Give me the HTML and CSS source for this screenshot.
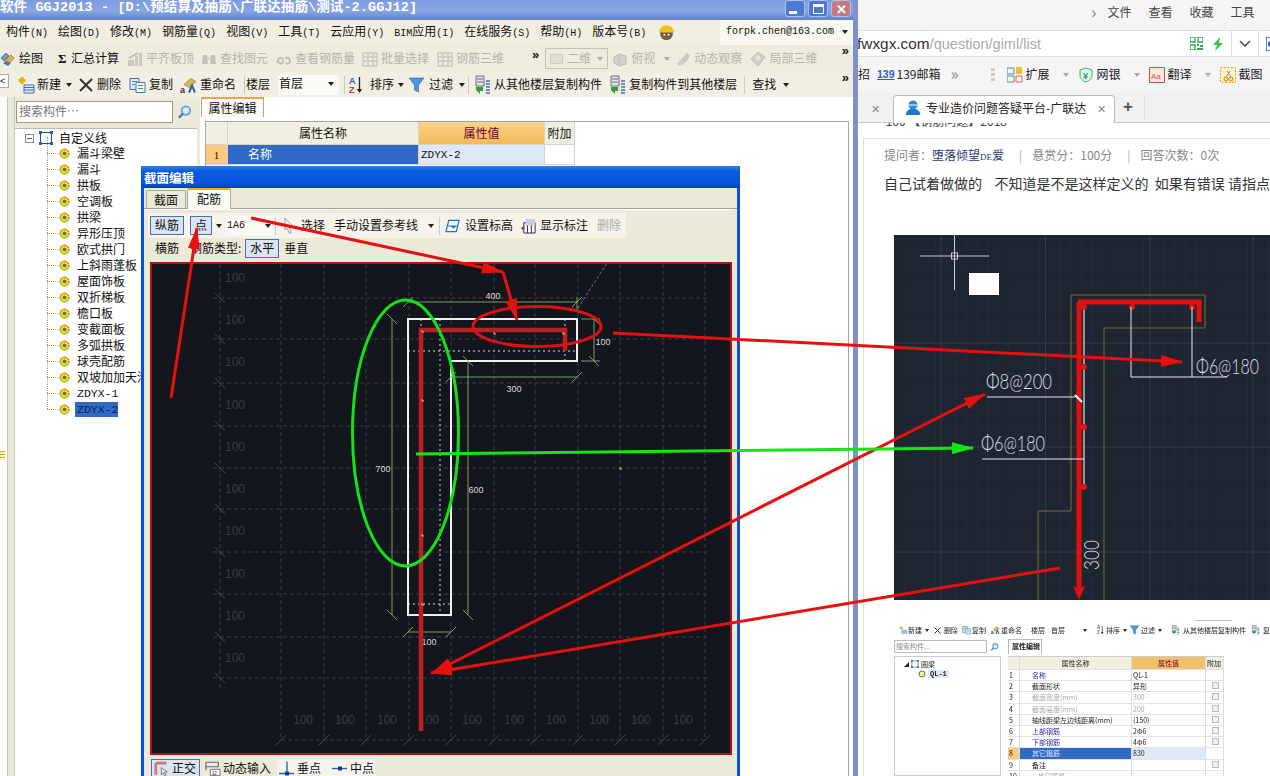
FILE: index.html
```html
<!DOCTYPE html>
<html lang="zh-CN">
<head>
<meta charset="utf-8">
<title>GGJ2013 截面编辑</title>
<link rel="stylesheet" href="styles.css">
</head>
<body>
<svg class="sprite" width="0" height="0">
  <defs>
    <symbol id="i-draw" viewBox="0 0 16 16"><path d="M1 7l5-5 3 3-5 5z" fill="#6a9ad8" stroke="#345" stroke-width=".6"/><path d="M6 8l5-4 3 3-5 6-4-1z" fill="#e8b040" stroke="#753" stroke-width=".6"/><path d="M3 12l5 3 3-3-4-2z" fill="#4a78c0"/></symbol>
    <symbol id="i-off1" viewBox="0 0 16 16"><path d="M1 9h6v6H1zM8 5h3v10H8zM12 2h3v13h-3z" fill="#c9c9c0"/><path d="M2 7l9-5" stroke="#bbb" stroke-width="2"/></symbol>
    <symbol id="i-off2" viewBox="0 0 16 16"><path d="M2 4h4l1 9H1zM10 4h4l1 9H9z" fill="#c4c4bb"/><path d="M6 6h4v3H6z" fill="#d4d4cc"/></symbol>
    <symbol id="i-off3" viewBox="0 0 16 16"><path d="M2 9c2-3 4-3 5 0s-1 4-3 3-3-1-2-3zM9 7c2-1 5 0 5 3s-3 3-4 2" fill="none" stroke="#c0c0b8" stroke-width="2"/></symbol>
    <symbol id="i-off4" viewBox="0 0 16 16"><path d="M1 2h14v13H1zM1 6h14M1 10h14M6 2v13M11 2v13" fill="none" stroke="#c8c8c0" stroke-width="1.4"/></symbol>
    <symbol id="i-off5" viewBox="0 0 16 16"><path d="M2 6l5-3 7 2v8l-6 2-6-3z" fill="#d2d2ca" stroke="#bbb"/><path d="M7 3v12" stroke="#bbb"/></symbol>
    <symbol id="i-off6" viewBox="0 0 16 16"><path d="M2 13L12 2l3 2-3 6-7 5z" fill="#c8c8c0"/><path d="M3 8l7 6" stroke="#dedad0" stroke-width="1.5"/></symbol>
    <symbol id="i-off7" viewBox="0 0 16 16"><path d="M8 1l7 5-7 9-7-7z" fill="#d0d0c8" stroke="#bbb"/><circle cx="8" cy="7" r="2.5" fill="#e8e6dc"/></symbol>
    <symbol id="i-new" viewBox="0 0 20 20"><path d="M7 2v7M3.500 5.500h7" stroke="#e0b010" stroke-width="3"/><path d="M9 10h10v8H9z" fill="#dfe9f6" stroke="#3a70b8"/><path d="M9 12.500h10M9 15h10" stroke="#3a70b8"/></symbol>
    <symbol id="i-del" viewBox="0 0 14 14"><path d="M1 1l12 12M13 1L1 13" stroke="#333" stroke-width="2"/></symbol>
    <symbol id="i-copy" viewBox="0 0 17 17"><path d="M1 2h9v11H1z" fill="#dfe8f4" stroke="#4a74a8"/><path d="M7 6h9v10H7z" fill="#f6f8fc" stroke="#4a74a8"/><path d="M3 5h5M3 8h3M9 9h5M9 12h5" stroke="#5a7cb0"/></symbol>
    <symbol id="i-rename" viewBox="0 0 17 17"><path d="M4 8l7-6 5 3-7 6z" fill="#d8b45a" stroke="#8a7030" stroke-width=".6"/><text x="0" y="16" class="ic-text">a</text><path d="M9 16l3-7 3 7" fill="none" stroke="#2a62b0" stroke-width="2"/></symbol>
    <symbol id="i-sort" viewBox="0 0 14 20"><text x="0" y="8.500" class="ic-az">A</text><text x="0" y="18" class="ic-za">Z</text><path d="M10.500 2v15" stroke="#222" stroke-width="1.300"/><path d="M8 14l2.500 4 2.500-4z" fill="#222"/></symbol>
    <symbol id="i-filter" viewBox="0 0 15 16"><path d="M0 1h15L9.500 8v7l-4-2V8z" fill="#4f93d8" stroke="#2a62a8" stroke-width=".6"/></symbol>
    <symbol id="i-floor" viewBox="0 0 17 20"><path d="M2 1h8v10H2z" fill="#e2e6ee" stroke="#667"/><path d="M3 4h6M3 7h6" stroke="#667"/><path d="M2 12h7v4H6v3L2 15z" fill="#3a9a3a"/><path d="M12 6h4M12 9h4M12 12h4M12 15h4M12 18h4" stroke="#3a70b8" stroke-width="1.500"/></symbol>
    <symbol id="i-search" viewBox="0 0 16 16"><circle cx="9.500" cy="6.500" r="4.500" fill="#dbeaf8" stroke="#6aa0d8" stroke-width="2"/><path d="M6 10l-4 4" stroke="#3f7cc0" stroke-width="2.500"/></symbol>
    <symbol id="i-node" viewBox="0 0 12 12"><circle cx="6" cy="6" r="5" fill="#e8d820" stroke="#5a5208" stroke-width="1" stroke-dasharray="1.500 1"/><circle cx="6" cy="6" r="2" fill="#7a6a10"/></symbol>
    <symbol id="i-root" viewBox="0 0 14 14"><path d="M1.500 1.500h11v11h-11z" fill="#fff" stroke="#1c4f9c"/><path d="M0 0h3v3H0zM11 0h3v3h-3zM0 11h3v3H0zM11 11h3v3h-3z" fill="#2a62b8"/></symbol>
    <symbol id="i-level" viewBox="0 0 16 16"><path d="M4 2h11l-3 12H1z" fill="#eef5fc" stroke="#2a72b8" stroke-width="1.300"/><path d="M3 8h10" stroke="#2a72b8"/><path d="M6 8l3 3 3-3z" fill="#2a72b8"/></symbol>
    <symbol id="i-mark" viewBox="0 0 16 17"><path d="M3 5h12v11H3zM7 5v11M11 5v11" fill="#fff" stroke="#223"/><path d="M5 1h10v7H5z" fill="#c4d0dc"/><circle cx="2" cy="11" r="1.500" fill="#b22"/></symbol>
    <symbol id="i-ortho" viewBox="0 0 18 16"><path d="M2 2h12M2 2v13" stroke="#c87878" stroke-width="3"/><path d="M8 7l7 5-3 .5 1.500 3-1.500 .5-1.500-3-2 2z" fill="#eee" stroke="#445" stroke-width=".7"/></symbol>
    <symbol id="i-dyn" viewBox="0 0 18 16"><path d="M1 1h14M1 6h14M1 1v9M15 1v5" fill="none" stroke="#667" stroke-width="1.300"/><path d="M6 9h11v7H6z" fill="#fff" stroke="#667"/><text x="7.500" y="15.500" class="ic-num">12</text></symbol>
    <symbol id="i-perp" viewBox="0 0 16 14"><path d="M0 12h15M8 0v12" stroke="#2a5ab8" stroke-width="1.300"/><rect x="6" y="10" width="4" height="4" fill="#1a3a90"/></symbol>
    <symbol id="i-mid" viewBox="0 0 16 14"><path d="M0 7h15" stroke="#2a5ab8" stroke-width="1.300"/><rect x="6" y="5" width="4" height="4" fill="#1a3a90"/></symbol>
    <marker id="ah" viewBox="0 0 22 12" refX="21" refY="6" markerWidth="22" markerHeight="12" markerUnits="userSpaceOnUse" orient="auto-start-reverse"><path d="M0 0L22 6L0 12z" fill="#e80f0f"/></marker>
    <marker id="ahg" viewBox="0 0 22 12" refX="21" refY="6" markerWidth="22" markerHeight="12" markerUnits="userSpaceOnUse" orient="auto"><path d="M0 0L22 6L0 12z" fill="#14e614"/></marker>
  </defs>
</svg>

<div class="desktop">
  <section class="gwin">
    <header class="gtitle">
      <span class="gtitle-text">软件 GGJ2013 - [D:\预结算及抽筋\广联达抽筋\测试-2.GGJ12]</span>
      <div class="wctl">
        <span class="wbtn"><i class="wmin"></i></span>
        <span class="wbtn"><i class="wmax"></i></span>
        <span class="wbtn wclose">✕</span>
      </div>
    </header>

    <nav class="menubar">
      <span>构件<b>(N)</b></span><span>绘图<b>(D)</b></span><span>修改<b>(M)</b></span><span>钢筋量<b>(Q)</b></span><span>视图<b>(V)</b></span><span>工具<b>(T)</b></span><span>云应用<b>(Y)</b></span><span><b>BIM</b>应用<b>(I)</b></span><span>在线服务<b>(S)</b></span><span>帮助<b>(H)</b></span><span>版本号<b>(B)</b></span>
      <svg class="hat" viewBox="0 0 16 16"><circle cx="8" cy="10" r="6" fill="#7a5a40"/><path d="M1 9a7 7 0 0 1 14 0z" fill="#f0c020"/><circle cx="6" cy="11" r="1" fill="#fff"/><circle cx="10" cy="11" r="1" fill="#fff"/></svg>
      <div class="account">forpk.chen@163.com<i class="caret"></i></div>
    </nav>

    <div class="tb tb1">
      <span class="ti"><svg class="ic16"><use href="#i-draw"/></svg>绘图</span>
      <span class="ti ml12"><b class="sigma">Σ</b>汇总计算</span>
      <span class="ti off ml8"><svg class="ic16"><use href="#i-off1"/></svg>平齐板顶</span>
      <span class="ti off ml7"><svg class="ic16"><use href="#i-off2"/></svg>查找图元</span>
      <span class="ti off ml8"><svg class="ic16"><use href="#i-off3"/></svg>查看钢筋量</span>
      <span class="ti off ml7"><svg class="ic16"><use href="#i-off4"/></svg>批量选择</span>
      <span class="ti off ml8"><svg class="ic16"><use href="#i-off4"/></svg>钢筋三维</span>
      <span class="more ml28">»</span>
      <span class="combo-off ml6"><i class="plane"></i>二维<i class="caret grey"></i></span>
      <span class="ti off ml4"><svg class="ic16"><use href="#i-off5"/></svg>俯视<i class="caret grey"></i></span>
      <span class="ti off ml5"><svg class="ic16"><use href="#i-off6"/></svg>动态观察</span>
      <span class="ti off ml8"><svg class="ic16"><use href="#i-off7"/></svg>局部三维</span>
      <span class="more right">»</span>
    </div>

    <div class="tb tb2">
      <span class="collapse">&lt;</span>
      <svg class="ic20 ml6"><use href="#i-new"/></svg><span class="ml2">新建</span><i class="caret ml5"></i>
      <svg class="ic14 ml7"><use href="#i-del"/></svg><span class="ml4">删除</span>
      <svg class="ic17 ml8"><use href="#i-copy"/></svg><span class="ml3">复制</span>
      <svg class="ic17 ml7"><use href="#i-rename"/></svg><span class="ml3">重命名</span>
      <i class="sep ml8"></i><span class="ml1">楼层</span>
      <span class="floor ml8">首层<i class="caret"></i></span>
      <i class="sep ml5"></i>
      <svg class="ic-sort ml4"><use href="#i-sort"/></svg><span class="ml7">排序</span><i class="caret ml4"></i>
      <svg class="ic15 ml5"><use href="#i-filter"/></svg><span class="ml5">过滤</span><i class="caret ml6"></i>
      <i class="sep ml3"></i>
      <svg class="ic17 ml5"><use href="#i-floor"/></svg><span class="ml3">从其他楼层复制构件</span>
      <svg class="ic17 ml7"><use href="#i-floor"/></svg><span class="ml3">复制构件到其他楼层</span>
      <i class="sep ml7"></i><span class="ml7">查找</span><i class="caret ml7"></i>
      <span class="more right">»</span>
    </div>

    <div class="gmain">
      <div class="rail"><span class="rail-mark"></span></div>
      <aside class="treepanel">
        <div class="searchrow">
          <span class="searchbox">搜索构件…</span>
          <svg class="ic15 search-ic"><use href="#i-search"/></svg>
        </div>
        <ul class="tree">
          <li class="root"><i class="minus"></i><svg class="rootbox"><use href="#i-root"/></svg>自定义线</li>
          <li><svg class="node"><use href="#i-node"/></svg>漏斗梁壁</li>
          <li><svg class="node"><use href="#i-node"/></svg>漏斗</li>
          <li><svg class="node"><use href="#i-node"/></svg>拱板</li>
          <li><svg class="node"><use href="#i-node"/></svg>空调板</li>
          <li><svg class="node"><use href="#i-node"/></svg>拱梁</li>
          <li><svg class="node"><use href="#i-node"/></svg>异形压顶</li>
          <li><svg class="node"><use href="#i-node"/></svg>欧式拱门</li>
          <li><svg class="node"><use href="#i-node"/></svg>上斜雨蓬板</li>
          <li><svg class="node"><use href="#i-node"/></svg>屋面饰板</li>
          <li><svg class="node"><use href="#i-node"/></svg>双折梯板</li>
          <li><svg class="node"><use href="#i-node"/></svg>檐口板</li>
          <li><svg class="node"><use href="#i-node"/></svg>变截面板</li>
          <li><svg class="node"><use href="#i-node"/></svg>多弧拱板</li>
          <li><svg class="node"><use href="#i-node"/></svg>球壳配筋</li>
          <li><svg class="node"><use href="#i-node"/></svg>双坡加加天沟</li>
          <li><svg class="node"><use href="#i-node"/></svg><span class="mono">ZDYX-1</span></li>
          <li><svg class="node"><use href="#i-node"/></svg><span class="mono sel">ZDYX-2</span></li>
        </ul>
      </aside>
      <section class="props">
        <div class="props-tabs"><span class="ptab">属性编辑</span></div>
        <div class="props-body">
          <div class="ptable">
            <span class="pc phead"></span><span class="pc phead">属性名称</span><span class="pc phead pval">属性值</span><span class="pc phead">附加</span>
            <span class="pc pnum">1</span><span class="pc pname">名称</span><span class="pc pvalue">ZDYX-2</span><span class="pc"></span>
          </div>
        </div>
      </section>
    </div>

    <!-- floating dialog window -->
    <section class="dlg">
      <header class="dlg-title">截面编辑</header>
      <div class="dlg-tabs"><span class="dtab">截面</span><span class="dtab on">配筋</span></div>
      <div class="dlg-panel">
        <div class="drow drow1">
          <span class="dbtn w34">纵筋</span>
          <span class="dbtn w22 ml6">点</span><i class="caret ml4"></i>
          <span class="dcombo ml3">1A6<i class="caret"></i></span>
          <i class="sep ml2"></i>
          <svg class="cursor ml8" viewBox="0 0 12 18"><path d="M1 1l10 10H6l2 6-2 .5-3-6-2 2z" fill="#eee" stroke="#999"/></svg>
          <span class="ml6">选择</span>
          <span class="ml9">手动设置参考线</span><i class="caret ml10"></i>
          <i class="sep ml5"></i>
          <svg class="ic15 ml5"><use href="#i-level"/></svg><span class="ml5">设置标高</span>
          <svg class="ic15 ml8"><use href="#i-mark"/></svg><span class="ml4">显示标注</span>
          <span class="gray ml9">删除</span>
        </div>
        <div class="drow drow2">
          <span class="ml7">横筋</span><span class="ml11">钢筋类型:</span>
          <span class="dbtn w34 ml4">水平</span><span class="ml5">垂直</span>
        </div>
        <svg class="cad" viewBox="150 262 582 493">
          <rect x="150" y="262" width="582" height="493" fill="#b3101a"/>
          <rect x="152" y="264" width="578" height="489" fill="#14161e"/>
          <path class="grid" d="M213 298H710M213 339H710M213 383H710M213 426H710M213 468H710M213 509H710M213 552H710M213 594H710M213 637H710M213 678H710M281 264V740M324 264V740M366 264V740M409 264V740M451 264V740M494 264V740M535 264V740M578 264V740M620 264V740M663 264V740M705 264V740M220 264V690M281 740H705"/>
          <path class="ticks" d="M215 293l10 10M215 334l10 10M215 378l10 10M215 421l10 10M215 463l10 10M215 504l10 10M215 547l10 10M215 589l10 10M215 632l10 10M215 673l10 10M276 745l10-10M319 745l10-10M361 745l10-10M404 745l10-10M446 745l10-10M489 745l10-10M530 745l10-10M573 745l10-10M615 745l10-10M658 745l10-10M700 745l10-10"/>
          <g class="lbl">
            <text x="235" y="282">100</text><text x="235" y="324">100</text><text x="235" y="366">100</text><text x="235" y="409">100</text><text x="235" y="451">100</text><text x="235" y="493">100</text><text x="235" y="535">100</text><text x="235" y="578">100</text><text x="235" y="620">100</text><text x="235" y="662">100</text>
            <text x="303" y="724">100</text><text x="345" y="724">100</text><text x="387" y="724">100</text><text x="429" y="724">100</text><text x="472" y="724">100</text><text x="514" y="724">100</text><text x="556" y="724">100</text><text x="599" y="724">100</text><text x="641" y="724">100</text><text x="683" y="724">100</text>
          </g>
          <path class="dash-w" d="M408 351H577M565 319V361M440 319V615M421 319V335M408 604H451"/>
          <path class="guide" d="M578 308L607 263"/>
          <path class="section" d="M408 319H577V361H451V615H408z"/>
          <path class="dim" d="M408 302H577M403 307l10-10M572 307l10-10M577 297V312M594 319V361M589 314l10 10M589 356l10 10M581 319H600M581 361H600M451 377H577M446 382l10-10M572 382l10-10M468 361V615M463 356l10 10M463 610l10 10M392 319V615M387 314l10 10M387 610l10 10M408 632H451M403 637l10-10M446 637l10-10"/>
          <g class="dimt"><text x="493" y="299">400</text><text x="603" y="345">100</text><text x="514" y="392">300</text><text x="476" y="493">600</text><text x="383" y="472">700</text><text x="429" y="645">100</text></g>
          <path class="bar" d="M421 731V330H565V351"/>
          <path class="pts" d="M421 331h2v2M493 333h2v2M562 333h2v2M421 400h2v2M421 535h2v2M421 604h2v2M619 468h2v2"/>
        </svg>
        <div class="dstatus">
          <span class="sbtn"><svg class="ic-st"><use href="#i-ortho"/></svg>正交</span>
          <span class="sitem ml5"><svg class="ic-st"><use href="#i-dyn"/></svg>动态输入</span>
          <span class="sitem light ml6"><svg class="ic-st"><use href="#i-perp"/></svg>垂点<svg class="ic-st ml9"><use href="#i-mid"/></svg>中点</span>
        </div>
      </div>
    </section>
  </section>

  <section class="browser">
    <div class="bmenu"><span class="chev">›</span><span>文件</span><span>查看</span><span>收藏</span><span>工具</span></div>
    <div class="baddr">
      <span class="url"><em>fwxgx.com</em>/question/giml/list</span>
      <svg class="qr" viewBox="0 0 13 13"><path d="M0 0h5v5H0zM8 0h5v5H8zM0 8h5v5H0z" fill="none" stroke="#2fa84f" stroke-width="1.300"/><path d="M7 7h2v2H7zM10 8h3v2h-3zM7 11h6v2H7z" fill="#2fa84f"/></svg>
      <svg class="bolt" viewBox="0 0 12 14"><path d="M8 0L1 8h4l-2 6 8-8H7z" fill="#33c44a"/></svg>
      <i class="vline"></i>
      <svg class="vchev" viewBox="0 0 12 8"><path d="M1 1l5 5 5-5" fill="none" stroke="#555" stroke-width="1.600"/></svg>
      <i class="vline"></i>
      <svg class="paw" viewBox="0 0 12 14"><path d="M0 0h12v14H0z" fill="#fff" stroke="#2a4fc0" stroke-width="1.500"/><circle cx="5" cy="7" r="3" fill="#2a4fc0"/></svg>
    </div>
    <div class="bbook">
      <span>招</span>
      <span class="b139 ml6"><b>139</b>139邮箱</span>
      <span class="dbl">»</span>
      <i class="grip"></i>
      <span class="bk"><svg class="bi" viewBox="0 0 16 16"><path d="M0 1h7v6H0z" fill="none" stroke="#3a8ad8"/><path d="M9 0h6v7H9z" fill="#f0c020"/><path d="M0 9h7v6H0z" fill="none" stroke="#3fb050"/><path d="M9 9h6v6H9z" fill="none" stroke="#e06060"/></svg>扩展<i class="caret grey ml10"></i></span>
      <span class="bk"><svg class="bi" viewBox="0 0 16 16"><path d="M8 1l6 2v5c0 4-3 6-6 7-3-1-6-3-6-7V3z" fill="#dff5ea" stroke="#3fb070"/><text x="5" y="12" class="ic-yen">¥</text></svg>网银<i class="caret grey ml10"></i></span>
      <span class="bk"><svg class="bi" viewBox="0 0 16 16"><path d="M.5.500h15v15H.5z" fill="#fde8e4" stroke="#d05040"/><text x="2" y="12" class="ic-aa">Aa</text></svg>翻译<i class="caret grey ml10"></i></span>
      <span class="bk"><svg class="bi" viewBox="0 0 16 16"><path d="M.5.500h15v15H.5z" fill="#fff2c8" stroke="#e0a020" stroke-dasharray="2 1.500"/><circle cx="6" cy="12" r="2" fill="none" stroke="#d08010"/><circle cx="11" cy="12" r="2" fill="none" stroke="#d08010"/><path d="M6 10l4-6M11 10L7 4" stroke="#888"/></svg>截图</span>
    </div>
    <div class="btabs">
      <span class="tabx first">✕</span>
      <div class="tab">
        <svg class="tabicon" viewBox="0 0 16 16"><circle cx="8" cy="5" r="4.500" fill="#2a8ad8"/><path d="M1 15c0-5 3-6 7-6s7 1 7 6z" fill="#1c78c8"/><path d="M4 5h8" stroke="#fff"/></svg>
        <span class="tabt">专业造价问题答疑平台-广联达</span>
        <span class="tabx">✕</span>
      </div>
      <span class="plus">+</span>
      <i class="tabend"></i>
    </div>
    <div class="bpage">
      <div class="clip"><span>▪ 100 【钢筋问题】2018</span></div>
      <article class="card">
        <p class="meta">提问者：<a>堕落倾望<b>DE</b>爱</a><i>|</i>悬赏分：100分<i>|</i>回答次数：0次</p>
        <p class="qtext">自己试着做做的&nbsp;&nbsp;&nbsp;&nbsp;不知道是不是这样定义的&nbsp;&nbsp;如果有错误&nbsp;请指点</p>
        <svg class="shot" viewBox="894 235 376 365">
          <defs><pattern id="mg" width="10.400" height="10.400" patternUnits="userSpaceOnUse"><path d="M10.400 0V10.400H0" fill="none" stroke="#29303b" stroke-width=".7"/></pattern></defs>
          <rect x="894" y="235" width="376" height="365" fill="#1f2530"/>
          <rect x="894" y="235" width="376" height="365" fill="url(#mg)"/>
          <path class="cmajor" d="M941 235V600M1045.500 235V600M1150 235V600M1253 235V600M894 343H1270M894 447H1270M894 552H1270"/>
          <path class="cross" d="M920 256H989M954.500 235V290"/>
          <rect class="cross" x="951.500" y="253" width="6" height="6" fill="none"/>
          <rect x="969" y="273" width="30" height="22" fill="#fff"/>
          <path class="outline" d="M1071 295H1205V328H1104V600M1071 295V511H1038V600"/>
          <path class="cgrey" d="M1084 307V487"/>
          <path class="cbar" d="M1078 302H1199V322M1079 302V590"/>
          <path d="M1079 600l-6-14 6 3 6-3z" fill="#e01010"/>
          <g fill="#d8161c"><circle cx="1084" cy="307" r="3"/><circle cx="1132" cy="307" r="3"/><circle cx="1192" cy="307" r="3"/><circle cx="1084" cy="367" r="3"/><circle cx="1084" cy="427" r="3"/><circle cx="1084" cy="487" r="3"/></g>
          <path class="lead" d="M1131 307V377H1227M1192 307V377M987 397H1075M982 459H1084"/>
          <path class="tickw" d="M1075 395l7 7"/>
          <g class="ct">
            <text x="1196" y="374" textLength="63" lengthAdjust="spacingAndGlyphs">Φ6@180</text>
            <text x="986" y="389" textLength="66" lengthAdjust="spacingAndGlyphs">Φ8@200</text>
            <text x="981" y="451" textLength="64" lengthAdjust="spacingAndGlyphs">Φ6@180</text>
            <text x="1099" y="570" transform="rotate(-90 1099 570)" textLength="30" lengthAdjust="spacingAndGlyphs">300</text>
          </g>
        </svg>
        <div class="thumb">
          <i class="th-topline"></i>
          <div class="th-tb">
            <svg class="th-ic"><use href="#i-new"/></svg><span class="ml1">新建</span><i class="th-c ml3"></i>
            <svg class="th-x ml5"><use href="#i-del"/></svg><span class="ml3">删除</span>
            <svg class="th-ic ml4"><use href="#i-copy"/></svg><span class="ml1">复制</span>
            <svg class="th-ic ml5"><use href="#i-rename"/></svg><span class="ml1">重命名</span>
            <span class="ml9">楼层</span><span class="ml6">首层</span><i class="th-c th-m1"></i>
            <svg class="th-ic ml9"><use href="#i-sort"/></svg><span class="ml1">排序</span><i class="th-c ml3"></i>
            <svg class="th-ic ml3"><use href="#i-filter"/></svg><span class="ml2">过滤</span><i class="th-c ml3"></i>
            <svg class="th-ic ml9"><use href="#i-floor"/></svg><span class="ml3">从其他楼层复制构件</span>
            <svg class="th-ic ml5"><use href="#i-floor"/></svg><span class="ml3">复制</span>
          </div>
          <div class="th-main">
            <div class="th-left">
              <div class="th-searchrow"><div class="th-search">搜索构件...</div><svg class="th-ic ml3"><use href="#i-search"/></svg></div>
              <div class="th-tree">
                <div><span class="th-tri">◢</span> <svg class="th-root"><use href="#i-root"/></svg> <span>圈梁</span></div>
                <div class="th-node"><svg class="th-dot" viewBox="0 0 8 8"><circle cx="4" cy="4" r="3" fill="#f4f0a0" stroke="#3a8a3a"/></svg><span>QL-1</span></div>
              </div>
            </div>
            <div class="th-right">
              <span class="th-tab">属性编辑</span>
              <div class="th-table">
                <span class="h"></span><span class="h c">属性名称</span><span class="h c o">属性值</span><span class="h">附加</span>
                <span>1</span><span class="b">名称</span><span>QL-1</span><span></span>
                <span>2</span><span>截面形状</span><span>异形</span><span class="k"><i></i></span>
                <span>3</span><span class="g">截面宽度(mm)</span><span class="g">300</span><span class="k"><i></i></span>
                <span>4</span><span class="g">截面高度(mm)</span><span class="g">200</span><span class="k"><i></i></span>
                <span>5</span><span>轴线距梁左边线距离(mm)</span><span>(150)</span><span class="k"><i></i></span>
                <span>6</span><span class="b">上部钢筋</span><span>2Φ6</span><span class="k"><i></i></span>
                <span>7</span><span class="b">下部钢筋</span><span>4Φ6</span><span class="k"><i></i></span>
                <span class="on">8</span><span class="sl">其它箍筋</span><span class="sv">830</span><span></span>
                <span>9</span><span>备注</span><span></span><span class="k"><i></i></span>
                <span>10</span><span class="g">+ 其它属性</span><span></span><span></span>
              </div>
            </div>
          </div>
        </div>
      </article>
    </div>
  </section>
</div>

<!-- annotation arrows drawn over the whole screen -->
<svg class="marks" viewBox="0 0 1270 776">
  <g class="red">
    <path d="M251 218L503 272" marker-end="url(#ah)"/>
    <path d="M503 272L517 320" marker-end="url(#ah)"/>
    <path d="M171 398L197 228" marker-end="url(#ah)"/>
    <path d="M613 333L1182 362" marker-end="url(#ah)"/>
    <path d="M432 673L985 394" marker-start="url(#ah)" marker-end="url(#ah)"/>
    <path d="M1060 568L431 673" marker-end="url(#ah)"/>
    <ellipse cx="537" cy="326.500" rx="64" ry="20"/>
  </g>
  <g class="green">
    <path d="M416 454L973 448" marker-end="url(#ahg)"/>
    <ellipse cx="405.500" cy="433" rx="53" ry="133"/>
  </g>
</svg>
</body>
</html>
```

FILE: styles.css
```css
* { box-sizing: border-box; }
html, body { margin: 0; padding: 0; width: 1270px; height: 776px; overflow: hidden; background: #fff; }
body { font: 12px/1.2 "Noto Sans CJK SC", "Noto Sans", sans-serif; color: #111; position: relative; }
.sprite { position: absolute; }
i { font-style: normal; display: block; }
svg { display: block; flex: none; }
.ic-text { font: 700 9px "Liberation Sans", sans-serif; fill: #333; }
.ic-az { font: 700 9px "Liberation Sans", sans-serif; fill: #2a62b0; }
.ic-za { font: 700 9px "Liberation Sans", sans-serif; fill: #c04040; }
.ic-num { font: 5px "Liberation Mono", monospace; fill: #333; }
.ic-yen { font: 700 9px "Liberation Sans", sans-serif; fill: #2a9a60; }
.ic-aa { font: 8px "Liberation Sans", sans-serif; fill: #d05040; }

.ml1 { margin-left: 1px; } .ml2 { margin-left: 2px; } .ml3 { margin-left: 3px; } .ml4 { margin-left: 4px; }
.ml5 { margin-left: 5px; } .ml6 { margin-left: 6px; } .ml7 { margin-left: 7px; } .ml8 { margin-left: 8px; }
.ml9 { margin-left: 9px; } .ml10 { margin-left: 10px; } .ml11 { margin-left: 11px; } .ml12 { margin-left: 12px; } .ml28 { margin-left: 28px; }

.desktop { display: flex; width: 1270px; height: 776px; }

/* left application window */
.gwin { position: relative; width: 858px; height: 776px; flex: none; display: flex; flex-direction: column; border-right: 5px solid #7f8fc9; background: #ece9d8; overflow: hidden; }
.gtitle { height: 20px; flex: none; display: flex; align-items: center; background: linear-gradient(#7d9ce0, #88a6e2 55%, #5d82d0); color: #fff; }
.gtitle-text { font: 700 13.500px/20px "Liberation Mono", "Noto Sans CJK SC", monospace; letter-spacing: .1px; margin-top: -5px; white-space: nowrap; }
.wctl { margin-left: auto; display: flex; gap: 3px; margin-right: 2px; margin-top: -3px; }
.wbtn { width: 20px; height: 17px; border-radius: 3px; background: #4d78d4; border: 1px solid #a8c0ee; position: relative; display: flex; align-items: center; justify-content: center; color: #fff; font-size: 13px; font-weight: 700; }
.wclose { background: #c87a80; }
.wmin { width: 8px; height: 3px; background: #fff; margin-top: 8px; margin-right: 4px; }
.wmax { width: 11px; height: 10px; border: 1.500px solid #fff; border-top-width: 3px; }

.menubar { height: 25px; flex: none; display: flex; align-items: center; gap: 10px; padding: 0 0 2px 6px; background: #f2efe2; position: relative; }
.menubar span { white-space: nowrap; }
.menubar b { font: 400 10px "Liberation Mono", monospace; }
.hat { width: 17px; height: 17px; margin-left: 2px; }
.account { margin-left: auto; width: 133px; height: 25px; margin-bottom: -2px; display: flex; align-items: center; gap: 8px; padding: 0 0 2px 6px; background: #f8f7f0; font: 10px "Liberation Mono", monospace; }

.caret { width: 0; height: 0; border-top: 4px solid #222; border-left: 3px solid transparent; border-right: 3px solid transparent; flex: none; }
.caret.grey { border-top-color: #aaa; }
.sep { width: 1px; height: 18px; background: #cfccba; flex: none; }

.tb { flex: none; display: flex; align-items: center; white-space: nowrap; position: relative; }
.tb1 { height: 27px; background: #eeecdf; }
.tb2 { height: 25px; background: #f1efe3; }
.ti { display: flex; align-items: center; gap: 3px; }
.off { color: #b4b4aa; }
.off .caret { margin-left: 6px; }
.ic16 { width: 16px; height: 16px; }
.ic20 { width: 20px; height: 20px; }
.ic17 { width: 17px; height: 20px; }
.ic15 { width: 15px; height: 16px; }
.ic14 { width: 14px; height: 14px; }
.ic-sort { width: 14px; height: 20px; }
.sigma { width: 10px; margin-left: 3px; font: 700 13px "Liberation Serif", serif; }
.more { font: 700 13px "Liberation Sans", sans-serif; margin-top: -8px; }
.more.right { position: absolute; right: 4px; top: 6px; }
.combo-off { width: 63px; height: 21px; display: flex; align-items: center; gap: 4px; padding: 0 4px; border: 1px solid #c4c2b4; color: #b4b4aa; }
.plane { width: 13px; height: 10px; background: #e2e0d4; border: 1px solid #cfcdc0; }
.combo-off .caret { margin-left: auto; }
.collapse { width: 9px; height: 14px; margin-top: -8px; border: 1px solid #aaa; border-left: 0; background: #fff; font: 9px/12px "Liberation Sans", sans-serif; }
.floor { width: 61px; height: 20px; background: #fbfaf5; display: flex; align-items: center; justify-content: space-between; padding: 0 5px 2px 1px; }

.gmain { flex: 1; display: flex; min-height: 0; background: #ece9d8; }
.rail { width: 15px; flex: none; padding-left: 7px; background: #fff; position: relative; }
.rail::before { content: ""; display: block; width: 6px; height: 100%; background: #e9e7d8; border: 1px solid #c8c6b6; border-width: 0 1px; }
.rail-mark { position: absolute; left: 0; top: 354px; width: 5px; height: 9px; background: repeating-linear-gradient(#e0a020 0 1px, #fff3c0 1px 3px); }
.treepanel { width: 182px; flex: none; background: #ece9d8; display: flex; flex-direction: column; }
.searchrow { height: 31px; flex: none; display: flex; align-items: center; padding: 0 0 2px 1px; }
.searchbox { width: 157px; height: 22px; background: #fff; border: 1px solid #9a9a90; color: #777; padding: 2px 0 0 2px; }
.search-ic { margin-left: 4px; }
.tree { flex: 1; margin: 0; padding: 0; list-style: none; background: #fff; border-top: 1px solid #bbb; }
.tree li { height: 16px; display: flex; align-items: center; padding-left: 44px; white-space: nowrap; position: relative; font-size: 12px; }
.tree li::before { content: ""; position: absolute; left: 32px; top: 8px; width: 11px; border-top: 1px dotted #999; }
.tree li::after { content: ""; position: absolute; left: 32px; top: -8px; height: 16px; border-left: 1px dotted #999; }
.tree .root { padding: 0 0 0 10px; height: 14px; margin-top: 2px; }
.tree .root::before, .tree .root::after { display: none; }
.node { width: 11px; height: 11px; margin-right: 7px; }
.minus { width: 9px; height: 9px; border: 1px solid #889; margin-right: 5px; background: linear-gradient(#556, #556) center / 5px 1px no-repeat #fff; }
.rootbox { width: 14px; height: 14px; margin-right: 6px; }
.mono { font: 11.500px "Liberation Mono", monospace; }
.sel { background: #316ac5; color: #0a1a50; padding: 1px 2px; margin-left: -2px; width: 43px; }
.props { flex: 1; margin-left: 3px; background: #fff; display: flex; flex-direction: column; padding-right: 0; }
.props-tabs { height: 24px; flex: none; padding-left: 1px; background: #fff; }
.ptab { display: block; width: 63px; height: 20px; background: #fbfaf3; border: 1px solid #a8a8a0; border-top: 2px solid #eda73c; border-bottom: 0; text-align: center; line-height: 17px; }
.props-body { flex: 1; margin-left: 5px; margin-right: 4px; border: 1px solid #a0a8a8; border-bottom: 0; }
.ptable { display: grid; grid-template-columns: 22px 191px 126px 30px; grid-template-rows: 23px 20px; width: 369px; }
.pc { border-right: 1px solid #d6d4c8; border-bottom: 1px solid #d6d4c8; display: flex; align-items: center; }
.phead { background: #f1efe2; justify-content: center; }
.pval { background: linear-gradient(#fbd489, #f2b95c); color: #700030; }
.pnum { background: #fdc97f; justify-content: center; font: 11px "Liberation Serif", serif; }
.pname { background: #316ac5; color: #fff; padding-left: 20px; }
.pvalue { background: #dfe8f5; font: 11px "Liberation Mono", monospace; padding-left: 2px; }

/* dialog */
.dlg { position: absolute; left: 141px; top: 166px; width: 599px; height: 610px; border: solid #0a50d8; border-width: 0 3px; background: #ece9d8; display: flex; flex-direction: column; }
.dlg-title { height: 22px; flex: none; margin: 0 -3px; padding: 4px 0 0 3px; background: linear-gradient(#2a80ee, #0a5be0 25%, #0754da 80%, #0540c0); color: #fff; font-weight: 700; font-size: 12.500px; }
.dlg-tabs { height: 20px; flex: none; display: flex; padding-left: 2px; gap: 1px; }
.dtab { width: 40px; height: 20px; margin-top: 2px; background: #ece9d8; border: 1px solid #aaa89a; border-bottom: 0; border-radius: 2px 2px 0 0; text-align: center; line-height: 17px; }
.dtab.on { width: 44px; margin-top: 0; height: 21px; background: #fbfbf6; border-top: 2px solid #f0a830; position: relative; z-index: 1; }
.dlg-panel { flex: 1; min-height: 0; border-top: 1px solid #a0a0a0; padding: 4px 0 0 4px; position: relative; }
.dlg-panel::before { content: ""; position: absolute; left: 0; right: 3px; top: 0; height: 1px; background: #fff; }
.drow { display: flex; align-items: center; white-space: nowrap; }
.drow1 { width: 478px; height: 25px; background: #f5f3ea; padding-left: 2px; }
.drow2 { height: 24px; padding-bottom: 3px; }
.gray { color: #aaa; }
.dbtn { height: 19px; display: flex; align-items: center; justify-content: center; background: #dce4f0; border: 1px solid #4a72b0; }
.w34 { width: 34px; } .w22 { width: 22px; }
.dcombo { width: 48px; height: 19px; background: #fbfaf5; display: flex; align-items: center; justify-content: space-between; padding: 0 2px 0 2px; font: 10px "Liberation Mono", monospace; }
.cursor { width: 11px; height: 17px; }
.cad { display: block; width: 582px; height: 493px; margin-left: 2px; }
.grid { stroke: #3a3c42; stroke-width: 1; stroke-dasharray: 4 3; fill: none; }
.ticks { stroke: #45474c; stroke-width: 1; fill: none; }
.lbl text { font: 12px "Liberation Sans", sans-serif; fill: #3a3c42; text-anchor: middle; }
.dash-w { stroke: #d8d8d8; stroke-dasharray: 2 3; fill: none; stroke-width: 1; }
.guide { stroke: #777; stroke-dasharray: 3 2; fill: none; }
.section { fill: none; stroke: #f0f0f0; stroke-width: 2; }
.dim { fill: none; stroke: #8fbc74; stroke-width: .8; }
.dimt text { font: 9px "Liberation Sans", sans-serif; fill: #d8d8d8; text-anchor: middle; }
.bar { fill: none; stroke: #b72024; stroke-width: 4.500; }
.pts { fill: none; stroke: #f0c070; stroke-width: 1; }
.dstatus { height: 19px; display: flex; align-items: center; margin: 4px 0 0 3px; white-space: nowrap; }
.sbtn, .sitem { display: flex; align-items: center; gap: 2px; height: 19px; }
.sbtn { width: 49px; padding: 0 0 0 2px; background: #dce4f0; border: 1px solid #4a72b0; }
.sitem.light { background: #f5f3ea; width: 98px; padding-left: 2px; }
.ic-st { width: 16px; height: 15px; }

/* browser window */
.browser { flex: 1; min-width: 0; display: flex; flex-direction: column; background: #fff; overflow: hidden; }
.bmenu { height: 30px; flex: none; background: #f5f5f5; display: flex; align-items: center; padding: 0 0 6px 233px; gap: 17px; color: #444; font-size: 12px; }
.chev { color: #888; font-size: 18px; line-height: 1; margin-right: -6px; margin-top: -3px; }
.baddr { height: 27px; flex: none; display: flex; align-items: center; background: #fff; border-top: 1px solid #ddd; border-bottom: 1px solid #ddd; white-space: nowrap; }
.url { font: 14.500px "Liberation Sans", sans-serif; color: #aaa; width: 333px; flex: none; margin-left: -1px; }
.url em { font: 15.400px "Liberation Sans", sans-serif; color: #333; }
.qr { width: 13px; height: 13px; margin-right: 9px; }
.bolt { width: 12px; height: 14px; margin-right: 7px; }
.vline { width: 1px; height: 26px; background: #ddd; flex: none; }
.vchev { width: 12px; height: 8px; margin: 0 7px; }
.paw { width: 12px; height: 14px; margin-left: 7px; }
.bbook { height: 35px; flex: none; background: #f5f5f5; display: flex; align-items: center; white-space: nowrap; color: #222; }
.b139 { display: flex; align-items: center; gap: 1px; font-size: 12px; }
.b139 b { color: #2f5fc4; font: 700 10.500px "Liberation Sans", sans-serif; text-decoration: underline; padding: 0 1px; }
.dbl { margin-left: 10px; color: #888; font-size: 17px; width: 40px; margin-top: -3px; flex: none; }
.grip { width: 4px; height: 14px; margin-right: 12px; background: repeating-linear-gradient(#ccc 0 3px, transparent 3px 5px); flex: none; }
.bk { display: flex; align-items: center; gap: 3px; margin-right: 9px; flex: none; }
.bi { width: 16px; height: 16px; }
.btabs { height: 31px; flex: none; background: #f1f1f1; border-bottom: 1px solid #ccc; display: flex; align-items: flex-end; }
.first { margin-left: 13px; margin-bottom: 8px; width: 22px; }
.tabx { color: #888; font-size: 11px; line-height: 1; }
.tab { width: 222px; height: 28px; margin-bottom: -1px; background: #fff; border: 1px solid #bbb; border-bottom: 0; border-radius: 4px 4px 0 0; display: flex; align-items: center; padding: 0 0 3px 11px; gap: 5px; white-space: nowrap; }
.tabicon { width: 16px; height: 16px; }
.tabt { width: 166px; font-size: 12px; color: #222; }
.plus { font: 700 17px "Liberation Sans", sans-serif; color: #555; margin: 0 0 5px 8px; width: 18px; }
.tabend { width: 1px; height: 22px; margin: 0 0 3px 3px; background: #ddd; }
.bpage { flex: 1; min-height: 0; position: relative; overflow: hidden; padding-left: 5px; }
.clip { height: 4px; overflow: hidden; line-height: 14px; color: #444; padding-left: 8px; font-size: 12px; }
.clip span { display: block; margin-top: -9px; }
.card { margin-top: 11px; border: 1px solid #e2e2e2; border-right: 0; padding-left: 20px; }
.meta { margin: 8px 0 0; font-size: 12px; color: #888; white-space: nowrap; line-height: 15px; }
.meta a { color: #2a3a7a; }
.meta b { font: 400 9px "Liberation Serif", serif; }
.meta i { display: inline-block; margin: 0 10px 0 15px; color: #aaa; }
.qtext { margin: 13px 0 0; font-size: 14px; line-height: 17px; color: #333; white-space: nowrap; }
.shot { width: 376px; height: 365px; margin: 43px 0 0 10px; }
.cmajor { stroke: #343b47; stroke-width: 1; fill: none; }
.cross { stroke: #c8ccd0; stroke-width: 1; fill: none; }
.outline { stroke: #6f7038; stroke-width: 1; fill: none; }
.cgrey { stroke: #b8bcc0; stroke-width: 1.500; fill: none; }
.cbar { stroke: #e01010; stroke-width: 5; fill: none; }
.lead { stroke: #e8e8e8; stroke-width: 1; fill: none; }
.tickw { stroke: #fff; stroke-width: 2; fill: none; }
.ct text { font: 300 21px "Lato", "Liberation Sans", sans-serif; fill: #d8dce0; }

/* thumbnail of another screenshot */
.thumb { margin: 20px 0 0 10px; width: 376px; height: 156px; background: #fff; filter: blur(.35px); font-size: 7px; color: #222; overflow: hidden; position: relative; }
.th-topline { position: absolute; left: 301px; top: 0; width: 37px; height: 1px; background: #bbb; }
.th-tb { height: 20px; display: flex; align-items: center; padding-left: 4px; white-space: nowrap; }
.th-ic { width: 9px; height: 10px; }
.th-x { width: 7px; height: 7px; }
.th-c { width: 0; height: 0; border-top: 3px solid #222; border-left: 2px solid transparent; border-right: 2px solid transparent; flex: none; }
.th-m1 { margin-left: 18px; }
.th-main { display: flex; }
.th-left { width: 107px; }
.th-searchrow { display: flex; align-items: center; }
.th-search { height: 13px; width: 93px; border: 1px solid #bbb; color: #888; line-height: 11px; padding-left: 1px; }
.th-tree { margin-top: 3px; height: 120px; width: 107px; border: 1px solid #ccc; padding: 2px 0 0 9px; line-height: 10px; }
.th-tree > div { display: flex; align-items: center; gap: 2px; }
.th-tri { font-size: 5px; }
.th-root { width: 8px; height: 8px; }
.th-node { margin: 1px 0 0 14px; }
.th-dot { width: 8px; height: 8px; }
.th-node span { background: #dfe8f5; font: 700 7px "Liberation Mono", monospace; padding: 0 2px; }
.th-right { margin-left: 7px; }
.th-tab { display: block; width: 34px; height: 15px; border: 1px solid #bbb; border-bottom: 0; padding-left: 3px; font-weight: 700; margin-top: -1px; line-height: 13px; }
.th-table { display: grid; grid-template-columns: 12px 112px 74px 18px; grid-template-rows: 13px; grid-auto-rows: 11.200px; width: 216px; margin-top: 2px; border-top: 1px solid #ccc; }
.th-table span { border-right: 1px solid #ddd; border-bottom: 1px solid #e2e2e2; line-height: 10px; white-space: nowrap; padding-left: 1px; overflow: hidden; }
.th-table .h { background: #f1efe2; line-height: 12px; }
.th-table .c { text-align: center; }
.th-table .o { background: #f2c06a; color: #800030; }
.th-table .b { color: #2a2aa8; }
.th-table .g { color: #aaa; }
.th-table span:nth-child(4n+2) { padding-left: 12px; }
.th-table span.h.c { padding-left: 0; }
.th-table .on { background: #fdc97f; }
.th-table .sl { background: #316ac5; color: #d8e4f8; }
.th-table .sv { background: #dfe8f5; }
.th-table .k i { width: 7px; height: 7px; margin: 1px auto; border: 1px solid #bbb; background: #f0f0f0; }

/* annotations */
.marks { position: absolute; left: 0; top: 0; width: 1270px; height: 776px; pointer-events: none; }
.red path { stroke: #e80f0f; stroke-width: 3; fill: none; }
.red ellipse { stroke: #e00f14; stroke-width: 3; fill: none; }
.green path { stroke: #14e614; stroke-width: 3; fill: none; }
.green ellipse { stroke: #14e01a; stroke-width: 3; fill: none; }
```
